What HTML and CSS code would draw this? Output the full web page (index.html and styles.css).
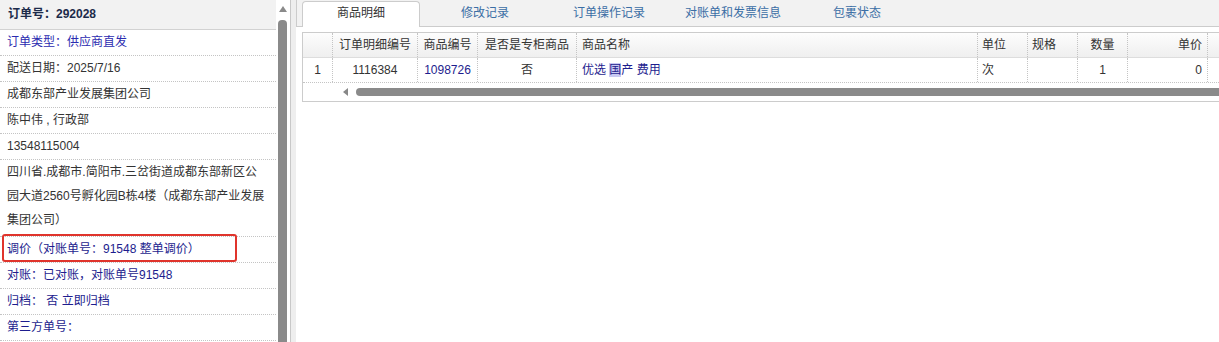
FILE: index.html
```html
<!DOCTYPE html>
<html lang="zh-CN">
<head>
<meta charset="utf-8">
<title>订单详情</title>
<link rel="stylesheet" href="styles.css">
</head>
<body>
<div class="page">
  <aside class="info">
    <div class="info-head">订单号：292028</div>
    <div class="info-row blue">订单类型：供应商直发</div>
    <div class="info-row">配送日期：2025/7/16</div>
    <div class="info-row">成都东部产业发展集团公司</div>
    <div class="info-row">陈中伟 , 行政部</div>
    <div class="info-row">13548115004</div>
    <div class="info-row addr">四川省.成都市.简阳市.三岔街道成都东部新区公<br>园大道2560号孵化园B栋4楼（成都东部产业发展<br>集团公司）</div>
    <div class="info-row navy marked">调价（对账单号：91548 整单调价）</div>
    <div class="info-row navy">对账：已对账，对账单号91548</div>
    <div class="info-row navy">归档： 否 立即归档</div>
    <div class="info-row navy">第三方单号：</div>
  </aside>
  <div class="vscroll"><span class="arrow-up"></span><span class="vthumb"></span></div>
  <div class="splitter"></div>
  <main class="detail">
    <nav class="tabs">
      <span class="tab active">商品明细</span>
      <span class="tab">修改记录</span>
      <span class="tab">订单操作记录</span>
      <span class="tab">对账单和发票信息</span>
      <span class="tab">包裹状态</span>
    </nav>
    <div class="grid">
      <div class="grid-row grid-head">
        <div class="cell c-rn"></div>
        <div class="cell c-id center">订单明细编号</div>
        <div class="cell c-code center">商品编号</div>
        <div class="cell c-flag center">是否是专柜商品</div>
        <div class="cell c-name">商品名称</div>
        <div class="cell c-unit">单位</div>
        <div class="cell c-spec">规格</div>
        <div class="cell c-qty center">数量</div>
        <div class="cell c-price right">单价</div>
        <div class="cell c-sum"></div>
      </div>
      <div class="grid-row grid-data">
        <div class="cell c-rn center">1</div>
        <div class="cell c-id center">1116384</div>
        <div class="cell c-code center link">1098726</div>
        <div class="cell c-flag center">否</div>
        <div class="cell c-name link">优选 <span class="hl">国</span>产 费用</div>
        <div class="cell c-unit">次</div>
        <div class="cell c-spec"></div>
        <div class="cell c-qty center">1</div>
        <div class="cell c-price right">0</div>
        <div class="cell c-sum"></div>
      </div>
      <div class="hscroll"><span class="arrow-left"></span><span class="hthumb"></span></div>
    </div>
  </main>
</div>
</body>
</html>
```

FILE: styles.css
```css
html, body {
  margin: 0;
  padding: 0;
}

body {
  font-family: "Liberation Sans", "Noto Sans CJK SC", sans-serif;
  font-size: 12px;
  color: #333;
  background: #fff;
  overflow: hidden;
}

.page {
  display: flex;
  height: 342px;
  overflow: hidden;
}

/* left info panel */
.info {
  width: 276px;
  flex: none;
  overflow: hidden;
}

.info-head {
  height: 29px;
  line-height: 29px;
  padding-left: 8px;
  background: #f2f2f2;
  border-bottom: 1px solid #d2d2d2;
  font-weight: bold;
  color: #1c2b4a;
}

.info-row {
  line-height: 25px;
  padding-left: 7px;
  border-bottom: 1px dotted #c4c4c4;
  white-space: nowrap;
}

.info-row.addr {
  line-height: 24px;
  padding-bottom: 4px;
}

.blue {
  color: #2b2bb0;
}

.navy {
  color: #1d1d8e;
}

.marked {
  position: relative;
}

.marked::after {
  content: "";
  position: absolute;
  left: 2px;
  top: -3px;
  width: 235px;
  height: 28px;
  box-sizing: border-box;
  border: 2px solid #e0342c;
  border-radius: 3px;
}

/* vertical scrollbar */
.vscroll {
  width: 14px;
  flex: none;
  display: flex;
  flex-direction: column;
  align-items: flex-start;
  padding-left: 2px;
  box-sizing: border-box;
}

.arrow-up {
  margin-top: 6px;
  margin-left: 0.5px;
  width: 0;
  height: 0;
  border-left: 4px solid transparent;
  border-right: 4px solid transparent;
  border-bottom: 6px solid #8a8a8a;
}

.vthumb {
  margin-top: 8px;
  width: 9px;
  flex: 1;
  background: #8a8a8a;
  border-radius: 4px 4px 0 0;
}

.splitter {
  width: 6px;
  flex: none;
  box-sizing: border-box;
  border-left: 1px solid #c8c8c8;
  background: #eeeeee;
}

/* right detail panel */
.detail {
  flex: 1;
  min-width: 0;
  overflow: hidden;
}

.tabs {
  display: flex;
  align-items: flex-end;
  gap: 6px;
  height: 26px;
  padding-left: 5px;
  background: #f2f2f2;
  border-left: 1px solid #cccccc;
  border-bottom: 1px solid #cccccc;
}

.tab {
  flex: none;
  width: 118px;
  height: 25px;
  line-height: 24px;
  text-align: center;
  color: #3b6ea5;
  box-sizing: border-box;
}

.tab.active {
  height: 26px;
  margin-bottom: -1px;
  line-height: 23px;
  background: #fff;
  border: 1px solid #cccccc;
  border-bottom: 0;
  border-radius: 4px 4px 0 0;
  color: #333;
}

.grid {
  margin: 5px 0 0 6px;
  width: 1100px;
  border: 1px solid #cccccc;
  border-right: 0;
}

.grid-row {
  display: flex;
  height: 24px;
  line-height: 24px;
}

.grid-head {
  background: linear-gradient(#fdfdfd, #efefef);
  border-bottom: 1px solid #dddddd;
}

.grid-data {
  border-bottom: 1px dotted #c4c4c4;
}

.cell {
  flex: none;
  box-sizing: border-box;
  padding: 0 5px;
  border-right: 1px dotted #c4c4c4;
  white-space: nowrap;
  overflow: hidden;
}

.center { text-align: center; }
.right { text-align: right; }

.c-rn { width: 30px; padding: 0; }
.c-id { width: 85px; padding: 0; }
.c-code { width: 60px; padding: 0; }
.c-flag { width: 99px; padding: 0; }
.c-name { width: 401px; }
.c-unit { width: 50px; padding-left: 4px; }
.c-spec { width: 50px; padding-left: 4px; }
.c-qty { width: 50px; padding: 0; }
.c-price { width: 80px; }
.c-sum { width: 100px; }

.link {
  color: #1d1d8e;
}

.hl {
  background: #c9c9f2;
}

.hscroll {
  height: 18px;
  display: flex;
  align-items: center;
  gap: 8px;
  padding-left: 40px;
}

.arrow-left {
  width: 0;
  height: 0;
  border-top: 4px solid transparent;
  border-bottom: 4px solid transparent;
  border-right: 5px solid #888888;
}

.hthumb {
  flex: 1;
  height: 8px;
  background: #8a8a8a;
  border-radius: 4px 0 0 4px;
}
```
